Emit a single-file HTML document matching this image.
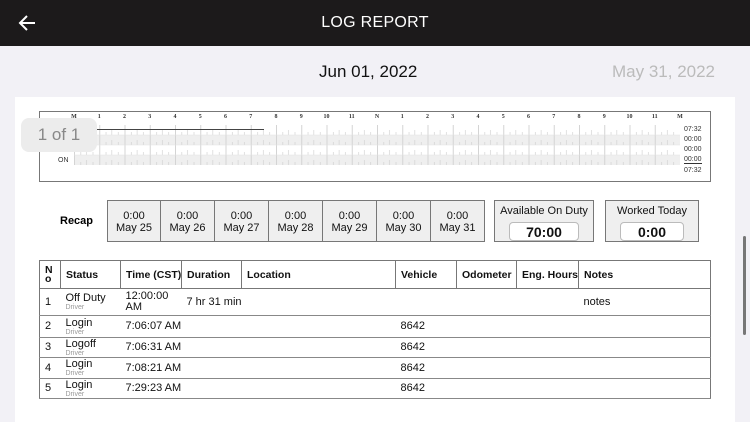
<!DOCTYPE html>
<html><head><meta charset="utf-8"><style>
*{margin:0;padding:0;box-sizing:border-box}
body{width:750px;height:422px;overflow:hidden;background:#f2f1f6;font-family:"Liberation Sans",Arial,sans-serif;position:relative}
.a{position:absolute}
#hdr{left:0;top:0;width:750px;height:46px;background:#1c1a1b;color:#fff;text-align:center;font-size:16px;line-height:46px;letter-spacing:.3px}
#content{left:15px;top:97px;width:720px;height:325px;background:#fff}
.hl{position:absolute;top:114px;left:61.4px;display:flex;font:bold 6px "Liberation Serif",serif;color:#333}
.hl span{width:25.25px;text-align:center}
.tot{position:absolute;left:684px;font-size:7px;color:#333}
.rb{position:absolute;top:200px;height:42px;width:54px;background:#efefef;border:1px solid #777;border-left:none;font-size:11px;text-align:center;padding-top:9px;line-height:12px;color:#111}
.big{position:absolute;top:200px;height:42px;background:#efefef;border:1px solid #777;font-size:11px;text-align:center;padding-top:4px;color:#111}
.big div{margin:5px auto 0;width:70px;height:19px;background:#fff;border:1px solid #bbb;border-radius:4px;font-weight:bold;font-size:14px;line-height:18px}
table{position:absolute;left:39px;top:260px;width:672px;border-collapse:collapse;font-size:11px;color:#111;border:1px solid #777;table-layout:fixed}
td,th{border-bottom:1px solid #888;padding:0 0 0 5px;text-align:left;vertical-align:middle;white-space:nowrap;overflow:hidden}
th{border:1px solid #777;font-weight:bold;height:28px;font-size:10.5px}
td small{display:block;font-size:7px;color:#999;line-height:7px}
td{line-height:11px}
</style></head><body>
<div id="hdr" class="a">LOG REPORT</div>
<svg class="a" style="left:17px;top:13px" width="20" height="20" viewBox="0 0 20 20"><path d="M18 10H3M10 3L3 10l7 7" stroke="#fff" stroke-width="2" fill="none"/></svg>
<div class="a" style="left:319px;top:62px;font-size:17px;color:#111">Jun 01, 2022</div>
<div class="a" style="left:612px;top:62px;font-size:17px;color:#bbb">May 31, 2022</div>
<div id="content" class="a"></div>
<div class="a" style="left:735px;top:97px;width:15px;height:325px;background:#f2f1f6"></div>
<div class="a" style="left:743px;top:236px;width:3px;height:99px;background:#777;border-radius:2px"></div>

<div class="a" style="left:39px;top:111px;width:672px;height:71px;border:1px solid #777"></div>
<div class="hl"><span>M</span><span>1</span><span>2</span><span>3</span><span>4</span><span>5</span><span>6</span><span>7</span><span>8</span><span>9</span><span>10</span><span>11</span><span>N</span><span>1</span><span>2</span><span>3</span><span>4</span><span>5</span><span>6</span><span>7</span><span>8</span><span>9</span><span>10</span><span>11</span><span>M</span></div>
<svg class="a" style="left:74px;top:125px" width="607" height="40" viewBox="0 0 607 40">
<defs><pattern id="p" width="25.25" height="10" patternUnits="userSpaceOnUse">
<line x1="0.5" y1="0" x2="0.5" y2="10" stroke="#d4d4d4" stroke-width="1"/>
<line x1="6.8" y1="7" x2="6.8" y2="10" stroke="#ccc" stroke-width="0.6"/>
<line x1="12.6" y1="5" x2="12.6" y2="10" stroke="#ccc" stroke-width="0.6"/>
<line x1="19" y1="7" x2="19" y2="10" stroke="#ccc" stroke-width="0.6"/>
</pattern></defs>
<rect x="0" y="10" width="606" height="10" fill="#efefef"/>
<rect x="0" y="30" width="606" height="10" fill="#efefef"/>
<rect x="0" y="0" width="606" height="40" fill="url(#p)"/>
<line x1="0" y1="10" x2="606" y2="10" stroke="#e2e2e2" stroke-width="0.5"/>
<line x1="0" y1="20" x2="606" y2="20" stroke="#e2e2e2" stroke-width="0.5"/>
<line x1="0" y1="30" x2="606" y2="30" stroke="#e2e2e2" stroke-width="0.5"/>
<line x1="0" y1="4.5" x2="190" y2="4.5" stroke="#444" stroke-width="1"/>
</svg>
<div class="a" style="left:58px;top:157px;font-size:7px;color:#333">ON</div>
<div class="tot" style="top:126px">07:32</div>
<div class="tot" style="top:136px">00:00</div>
<div class="tot" style="top:146px">00:00</div>
<div class="tot" style="top:156px;border-bottom:1px solid #333">00:00</div>
<div class="tot" style="top:167px">07:32</div>
<div class="a" style="left:21px;top:118px;width:76px;height:34px;background:#ececec;border-radius:8px;color:#888;font-size:17px;text-align:center;line-height:34px">1 of 1</div>

<div class="a" style="left:60px;top:215px;font-size:11px;font-weight:bold">Recap</div>
<div class="a" style="left:107px;top:200px;width:1px;height:42px;background:#777"></div>
<div class="rb" style="left:108px;width:53px">0:00<br>May 25</div>
<div class="rb" style="left:161px">0:00<br>May 26</div>
<div class="rb" style="left:215px">0:00<br>May 27</div>
<div class="rb" style="left:269px">0:00<br>May 28</div>
<div class="rb" style="left:323px">0:00<br>May 29</div>
<div class="rb" style="left:377px">0:00<br>May 30</div>
<div class="rb" style="left:431px">0:00<br>May 31</div>
<div class="big" style="left:494px;width:100px">Available On Duty<div>70:00</div></div>
<div class="big" style="left:605px;width:94px">Worked Today<div style="width:64px">0:00</div></div>

<table>
<colgroup><col style="width:21px"><col style="width:60px"><col style="width:61px"><col style="width:60px"><col style="width:154px"><col style="width:61px"><col style="width:60px"><col style="width:62px"><col></colgroup>
<tr><th style="line-height:9px">N<br>o</th><th>Status</th><th>Time (CST)</th><th>Duration</th><th>Location</th><th>Vehicle</th><th>Odometer</th><th>Eng. Hours</th><th>Notes</th></tr>
<tr style="height:27px"><td>1</td><td>Off Duty<small>Driver</small></td><td>12:00:00<br>AM</td><td>7 hr 31 min</td><td></td><td></td><td></td><td></td><td>notes</td></tr>
<tr style="height:22px"><td>2</td><td>Login<small>Driver</small></td><td>7:06:07 AM</td><td></td><td></td><td>8642</td><td></td><td></td><td></td></tr>
<tr style="height:20px"><td>3</td><td>Logoff<small>Driver</small></td><td>7:06:31 AM</td><td></td><td></td><td>8642</td><td></td><td></td><td></td></tr>
<tr style="height:21px"><td>4</td><td>Login<small>Driver</small></td><td>7:08:21 AM</td><td></td><td></td><td>8642</td><td></td><td></td><td></td></tr>
<tr style="height:20px"><td>5</td><td>Login<small>Driver</small></td><td>7:29:23 AM</td><td></td><td></td><td>8642</td><td></td><td></td><td></td></tr>
</table>
</body></html>
